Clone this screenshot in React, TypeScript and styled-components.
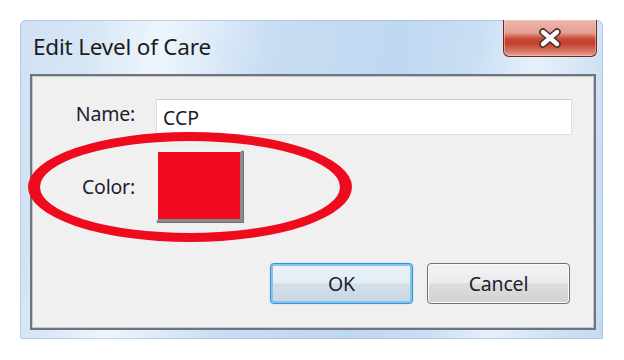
import React from "react";
import styled, { createGlobalStyle } from "styled-components";

const GlobalStyle = createGlobalStyle`
  html, body { margin: 0; padding: 0; background: #ffffff; }
  body { font-family: "Noto Sans", "Open Sans", sans-serif; }
`;

const Page = styled.div`
  position: relative;
  width: 624px;
  height: 360px;
  padding: 20px 0 0 20px;
  box-sizing: border-box;
  background: #ffffff;
  overflow: hidden;
`;

const Frame = styled.div`
  width: 583px;
  height: 319px;
  box-sizing: border-box;
  padding: 0 7px 9px 10px;
  display: flex;
  flex-direction: column;
  border-radius: 6px 6px 2px 2px;
  background:
    linear-gradient(100deg,
      #cfe1f4 0%,
      #d8e7f6 12%,
      #eef5fc 22%,
      #e3eefa 28%,
      #c8ddf3 40%,
      #bfd8f1 60%,
      #c9def4 72%,
      #e6f0fb 82%,
      #cfe2f5 92%,
      #c3dbf2 100%);
  box-shadow: inset 0 0 0 1px rgba(120, 150, 185, 0.35);
`;

const TitleBar = styled.div`
  height: 54px;
  display: flex;
  align-items: flex-start;
  justify-content: space-between;
`;

const Title = styled.div`
  margin: 12px 0 0 3px;
  font-size: 22.5px;
  line-height: 30px;
  color: #1c1c1c;
  letter-spacing: -0.2px;
`;

const CloseButton = styled.div`
  width: 94px;
  height: 37px;
  margin-right: -1px;
  box-sizing: border-box;
  border: 1px solid #6e2a22;
  border-top: none;
  border-radius: 0 0 6px 6px;
  background: linear-gradient(
    #ecb7ae 0%,
    #e4a092 35%,
    #c94a37 52%,
    #c0402e 65%,
    #d6705f 85%,
    #e8a092 100%
  );
  box-shadow: inset 0 0 0 1px rgba(255, 210, 200, 0.5);
  display: flex;
  align-items: center;
  justify-content: center;
`;

const Panel = styled.div`
  flex: 1;
  box-sizing: border-box;
  border: 2px solid #6f747d;
  box-shadow: inset 0 0 0 1px #c4c7cd;
  background: #f0f0f0;
  display: flex;
  flex-direction: column;
`;

const FormGrid = styled.div`
  display: grid;
  grid-template-columns: 103px 1fr;
  column-gap: 21px;
  row-gap: 15px;
  padding: 23px 22px 0 0;
`;

const Label = styled.div<{ $shift?: number }>`
  text-align: right;
  align-self: center;
  font-size: 19.5px;
  letter-spacing: -0.2px;
  color: #1d1d33;
  margin-top: ${(p) => p.$shift ?? 0}px;
`;

const TextInput = styled.div`
  height: 36px;
  box-sizing: border-box;
  background: #ffffff;
  border: 1px solid #dddee4;
  border-top-color: #c9cbd2;
  padding: 0 6px;
  display: flex;
  align-items: center;
  font-size: 19.5px;
  color: #1b1b2e;
`;

const Swatch = styled.div<{ $color: string }>`
  width: 87px;
  height: 72px;
  box-sizing: border-box;
  background: ${(p) => p.$color};
  border-top: 2px solid #f4f4f4;
  border-left: 2px solid #f4f4f4;
  border-right: 3px solid #8a8a8a;
  border-bottom: 3px solid #8a8a8a;
  box-shadow: 1px 1px 0 #6f6f6f;
`;

const ButtonRow = styled.div`
  margin-top: auto;
  display: flex;
  justify-content: flex-end;
  gap: 14px;
  padding: 0 24px 24px 0;
`;

const Button = styled.div<{ $default?: boolean }>`
  width: 143px;
  height: 41px;
  box-sizing: border-box;
  border-radius: 4px;
  display: flex;
  align-items: center;
  justify-content: center;
  font-size: 19.5px;
  letter-spacing: -0.2px;
  color: #1d1d30;
  border: 1px solid ${(p) => (p.$default ? "#3c8fd0" : "#707070")};
  background: ${(p) =>
    p.$default
      ? "linear-gradient(#edf4fa 0%, #e3ecf4 48%, #d3dee8 52%, #c9d7e4 100%)"
      : "linear-gradient(#f3f3f3 0%, #ebebeb 48%, #dddddd 52%, #d2d2d2 100%)"};
  box-shadow: ${(p) =>
    p.$default
      ? "inset 0 0 0 2px #7fc6ee, 0 0 1px #5ab0e8"
      : "inset 0 0 0 1px #fbfbfb"};
`;

const Annotation = styled.svg`
  position: absolute;
  left: 26px;
  top: 130px;
  pointer-events: none;
`;

export default function App() {
  // ellipse (page coords): center (190,187), outer rx 162 ry 55, inner rx 150 ry 46
  const cx = 164;
  const cy = 57;
  const ring = `M ${cx - 162} ${cy} a 162 55 0 1 0 324 0 a 162 55 0 1 0 -324 0 Z
    M ${cx - 150} ${cy} a 150 46 0 1 0 300 0 a 150 46 0 1 0 -300 0 Z`;
  return (
    <>
      <GlobalStyle />
      <Page>
        <Frame>
          <TitleBar>
            <Title>Edit Level of Care</Title>
            <CloseButton>
              <svg width="28" height="20" viewBox="0 0 28 20">
                <path
                  d="M7 4 L21 16 M21 4 L7 16"
                  stroke="#4a2a2a"
                  strokeWidth="7.5"
                  strokeLinecap="round"
                  fill="none"
                />
                <path
                  d="M7 4 L21 16 M21 4 L7 16"
                  stroke="#ffffff"
                  strokeWidth="4.4"
                  strokeLinecap="round"
                  fill="none"
                />
              </svg>
            </CloseButton>
          </TitleBar>
          <Panel>
            <FormGrid>
              <Label $shift={-8}>Name:</Label>
              <TextInput>CCP</TextInput>
              <Label>Color:</Label>
              <Swatch $color="#f00a1e" />
            </FormGrid>
            <ButtonRow>
              <Button $default>OK</Button>
              <Button>Cancel</Button>
            </ButtonRow>
          </Panel>
        </Frame>
        <Annotation width="332" height="118" viewBox="0 0 332 118">
          <path d={ring} fill="#ee0b1d" fillRule="evenodd" />
        </Annotation>
      </Page>
    </>
  );
}
